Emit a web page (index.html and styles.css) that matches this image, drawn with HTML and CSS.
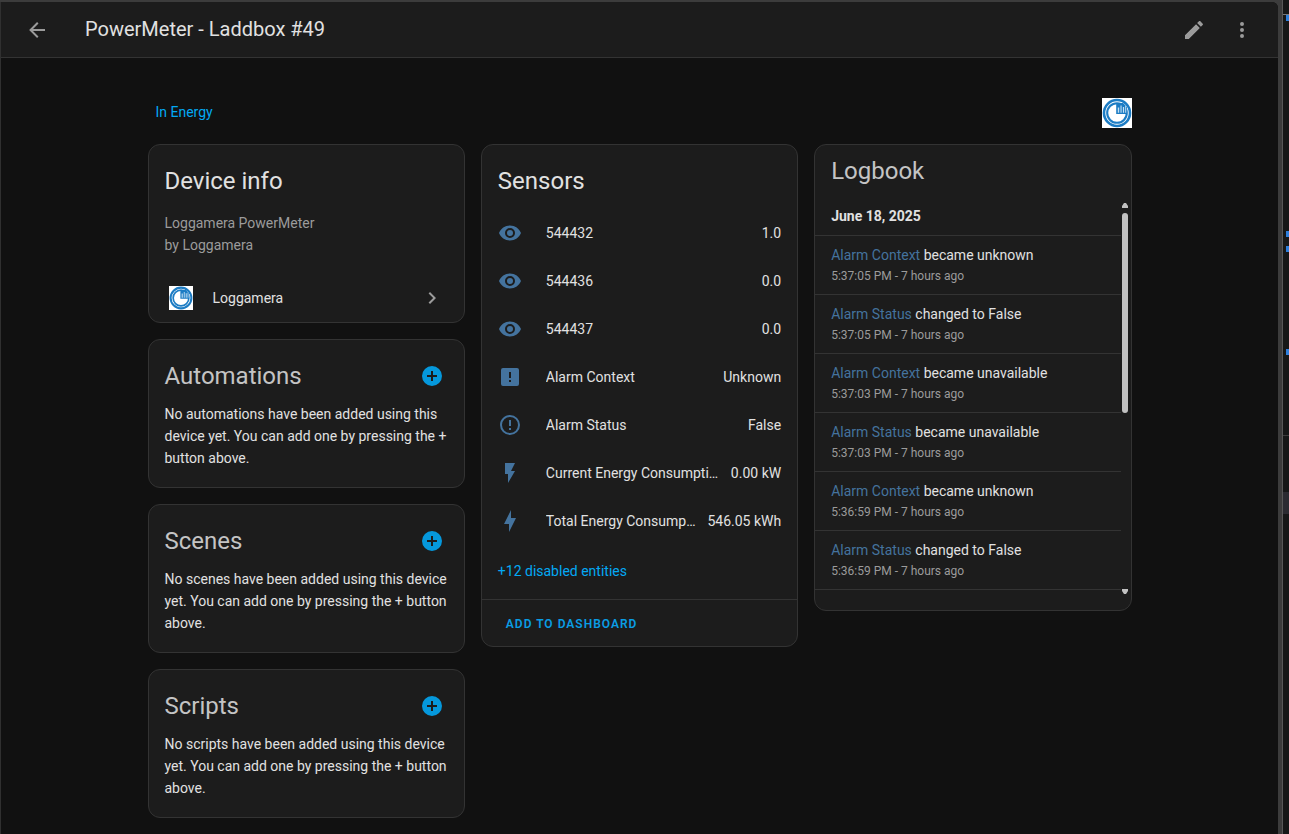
FILE: index.html
```html
<!DOCTYPE html>
<html lang="en">
<head>
<meta charset="utf-8">
<title>PowerMeter - Laddbox #49</title>
<link rel="stylesheet" href="styles.css">
</head>
<body>
<svg class="defs" aria-hidden="true">
  <symbol id="eye" viewBox="0 0 24 24"><path d="M12,9A3,3 0 0,0 9,12A3,3 0 0,0 12,15A3,3 0 0,0 15,12A3,3 0 0,0 12,9M12,17A5,5 0 0,1 7,12A5,5 0 0,1 12,7A5,5 0 0,1 17,12A5,5 0 0,1 12,17M12,4.5C7,4.5 2.73,7.61 1,12C2.73,16.39 7,19.5 12,19.5C17,19.5 21.27,16.39 23,12C21.27,7.61 17,4.5 12,4.5Z"/></symbol>
  <symbol id="alert-box" viewBox="0 0 24 24"><path d="M5,3H19A2,2 0 0,1 21,5V19A2,2 0 0,1 19,21H5A2,2 0 0,1 3,19V5A2,2 0 0,1 5,3M13,13V7H11V13H13M13,17V15H11V17H13Z"/></symbol>
  <symbol id="alert-circle" viewBox="0 0 24 24"><path d="M11,15H13V17H11V15M11,7H13V13H11V7M12,2C6.47,2 2,6.5 2,12A10,10 0 0,0 12,22A10,10 0 0,0 22,12A10,10 0 0,0 12,2M12,20A8,8 0 0,1 4,12A8,8 0 0,1 12,4A8,8 0 0,1 20,12A8,8 0 0,1 12,20Z"/></symbol>
  <symbol id="flash" viewBox="0 0 24 24"><path d="M7,2V13H10V22L17,10H13L17,2H7Z"/></symbol>
  <symbol id="bolt" viewBox="0 0 24 24"><path d="M11 15H6L13 1V9H18L11 23V15Z"/></symbol>
  <symbol id="plus-circle" viewBox="0 0 24 24"><path d="M17,13H13V17H11V13H7V11H11V7H13V11H17M12,2A10,10 0 0,0 2,12A10,10 0 0,0 12,22A10,10 0 0,0 22,12A10,10 0 0,0 12,2Z"/></symbol>
  <symbol id="brand" viewBox="0 0 30 30">
    <rect width="30" height="30" fill="#fff"/>
    <circle cx="15" cy="15" r="13" fill="none" stroke="#1c7cc4" stroke-width="2.6"/>
    <circle cx="15" cy="15" r="9.8" fill="none" stroke="#1c7cc4" stroke-width="2.1"/>
    <path d="M14.200 5H21L25 9V16H14.200Z" fill="#1c7cc4"/>
    <path d="M15.800 9.500H17.200V14.800H15.800ZM18.500 7.500H19.600V14.800H18.500ZM20.900 9H22.100V14.800H20.900ZM23.200 8H24.200V14.800H23.200Z" fill="#c5e0f3"/>
  </symbol>
</svg>
<div class="shell">
  <div class="window">
    <header class="toolbar">
      <button class="icon-btn" aria-label="Back"><svg class="icon" viewBox="0 0 24 24"><path d="M20,11V13H8L13.500,18.500L12.080,19.920L4.160,12L12.080,4.080L13.500,5.500L8,11H20Z"/></svg></button>
      <h1 class="toolbar-title">PowerMeter - Laddbox #49</h1>
      <button class="icon-btn" aria-label="Edit"><svg class="icon" viewBox="0 0 24 24"><path d="M20.710,7.040C21.100,6.650 21.100,6 20.710,5.630L18.370,3.290C18,2.900 17.350,2.900 16.960,3.290L15.120,5.120L18.870,8.870M3,17.250V21H6.750L17.810,9.930L14.060,6.180L3,17.250Z"/></svg></button>
      <button class="icon-btn" aria-label="Menu"><svg class="icon" viewBox="0 0 24 24"><path d="M12,16A2,2 0 0,1 14,18A2,2 0 0,1 12,20A2,2 0 0,1 10,18A2,2 0 0,1 12,16M12,10A2,2 0 0,1 14,12A2,2 0 0,1 12,14A2,2 0 0,1 10,12A2,2 0 0,1 12,10M12,4A2,2 0 0,1 14,6A2,2 0 0,1 12,8A2,2 0 0,1 10,6A2,2 0 0,1 12,4Z"/></svg></button>
    </header>
    <main class="content">
      <div class="area-row">
        <a class="link" href="#area">In Energy</a>
        <svg class="area-logo" role="img" aria-label="Loggamera"><use href="#brand"/></svg>
      </div>
      <div class="columns">
        <div class="column">
          <section class="card">
            <h2 class="card-title strong tall">Device info</h2>
            <p class="device-meta">Loggamera PowerMeter<br>by Loggamera</p>
            <a class="integration" href="#integration">
              <svg class="icon"><use href="#brand"/></svg>
              <span class="grow">Loggamera</span>
              <svg class="icon muted" viewBox="0 0 24 24"><path d="M8.590,16.580L13.170,12L8.590,7.410L10,6L16,12L10,18L8.590,16.580Z"/></svg>
            </a>
          </section>
          <section class="card">
            <div class="add-head"><h2 class="card-title">Automations</h2><button class="add-btn" aria-label="Add automation"><svg class="icon"><use href="#plus-circle"/></svg></button></div>
            <p class="card-text">No automations have been added using this device yet. You can add one by pressing the + button above.</p>
          </section>
          <section class="card">
            <div class="add-head"><h2 class="card-title">Scenes</h2><button class="add-btn" aria-label="Add scene"><svg class="icon"><use href="#plus-circle"/></svg></button></div>
            <p class="card-text">No scenes have been added using this device yet. You can add one by pressing the + button above.</p>
          </section>
          <section class="card">
            <div class="add-head"><h2 class="card-title">Scripts</h2><button class="add-btn" aria-label="Add script"><svg class="icon"><use href="#plus-circle"/></svg></button></div>
            <p class="card-text">No scripts have been added using this device yet. You can add one by pressing the + button above.</p>
          </section>
        </div>
        <div class="column">
          <section class="card">
            <h2 class="card-title strong tall">Sensors</h2>
            <ul class="sensors">
              <li class="sensor"><svg class="icon"><use href="#eye"/></svg><span class="name">544432</span><span>1.0</span></li>
              <li class="sensor"><svg class="icon"><use href="#eye"/></svg><span class="name">544436</span><span>0.0</span></li>
              <li class="sensor"><svg class="icon"><use href="#eye"/></svg><span class="name">544437</span><span>0.0</span></li>
              <li class="sensor"><svg class="icon"><use href="#alert-box"/></svg><span class="name">Alarm Context</span><span>Unknown</span></li>
              <li class="sensor"><svg class="icon"><use href="#alert-circle"/></svg><span class="name">Alarm Status</span><span>False</span></li>
              <li class="sensor"><svg class="icon"><use href="#flash"/></svg><span class="name">Current Energy Consumption</span><span>0.00 kW</span></li>
              <li class="sensor"><svg class="icon"><use href="#bolt"/></svg><span class="name">Total Energy Consumption</span><span>546.05 kWh</span></li>
            </ul>
            <button class="link disabled-toggle">+12 disabled entities</button>
            <div class="card-actions"><button class="action-btn">Add to dashboard</button></div>
          </section>
        </div>
        <div class="column">
          <section class="card">
            <h2 class="card-title logbook-title">Logbook</h2>
            <div class="logbook">
              <div class="entries">
                <h3 class="date">June 18, 2025</h3>
                <div class="entry"><p class="event"><a href="#e1">Alarm Context</a> became unknown</p><p class="time">5:37:05 PM - 7 hours ago</p></div>
                <div class="entry"><p class="event"><a href="#e2">Alarm Status</a> changed to False</p><p class="time">5:37:05 PM - 7 hours ago</p></div>
                <div class="entry"><p class="event"><a href="#e3">Alarm Context</a> became unavailable</p><p class="time">5:37:03 PM - 7 hours ago</p></div>
                <div class="entry"><p class="event"><a href="#e4">Alarm Status</a> became unavailable</p><p class="time">5:37:03 PM - 7 hours ago</p></div>
                <div class="entry"><p class="event"><a href="#e5">Alarm Context</a> became unknown</p><p class="time">5:36:59 PM - 7 hours ago</p></div>
                <div class="entry"><p class="event"><a href="#e6">Alarm Status</a> changed to False</p><p class="time">5:36:59 PM - 7 hours ago</p></div>
              </div>
              <div class="scrollbar" aria-hidden="true">
                <svg class="arrow" viewBox="0 0 6 5"><path d="M2 0H4L6 3V5H0V3Z"/></svg>
                <div class="track"><div class="thumb"></div></div>
                <svg class="arrow" viewBox="0 0 6 5"><path d="M0 0H6V2L4 5H2L0 2Z"/></svg>
              </div>
            </div>
          </section>
        </div>
      </div>
    </main>
  </div>
  <aside class="edge" aria-hidden="true">
    <div class="edge-line bright"></div>
    <div class="mark first"></div>
    <div class="mark second"></div>
    <div class="mark third"></div>
    <div class="mark fourth"></div>
    <div class="edge-line"></div>
    <div class="edge-block"></div>
  </aside>
</div>
</body>
</html>
```
FILE: styles.css
```css
* { box-sizing: border-box; }
body {
  margin: 0;
  background: #3c3c3c;
  color: #e1e1e1;
  font: 400 14px/22px Roboto, "Noto Sans", sans-serif;
}
h1, h2, h3, p, ul { margin: 0; padding: 0; font-weight: 400; }
button {
  margin: 0;
  padding: 0;
  border: 0;
  background: none;
  color: inherit;
  font: inherit;
  cursor: pointer;
}
a { text-decoration: none; color: inherit; }
.defs { display: none; }
.icon { display: block; flex: none; width: 24px; height: 24px; fill: currentColor; }
.muted { color: #9b9b9b; }
.grow { flex: 1; }
.link { color: #03a9f4; }

.shell { display: flex; min-height: 100vh; }
.window {
  flex: 1;
  min-width: 0;
  margin: 2px 4px 0 0;
  border-left: 1px solid #303030;
  border-radius: 0 6px 0 0;
  background: #111;
  overflow: hidden;
}

.toolbar {
  display: flex;
  align-items: center;
  height: 56px;
  padding: 0 12px;
  border-bottom: 1px solid #333;
  background: #1c1c1c;
}
.toolbar-title { flex: 1; padding-bottom: 2px; margin-left: 24px; font-size: 20px; line-height: 24px; }
.icon-btn {
  display: flex;
  align-items: center;
  justify-content: center;
  width: 48px;
  height: 48px;
  color: #9b9b9b;
}

.content { max-width: 1000px; margin: 0 auto; padding: 40px 8px 16px; }
.area-row {
  display: flex;
  align-items: center;
  justify-content: space-between;
  padding-left: 8px;
  margin-bottom: 16px;
}
.area-row .link { padding-bottom: 2px; }
.area-logo { display: block; width: 30px; height: 30px; }
.columns {
  display: grid;
  grid-template-columns: repeat(3, minmax(0, 1fr));
  gap: 16px;
  align-items: start;
}
.column { display: grid; gap: 16px; }
.card {
  min-width: 0;
  border: 1px solid #333;
  border-radius: 12px;
  background: #1c1c1c;
  overflow: hidden;
}
.card-title { padding: 0 16px; color: #c4c4c4; font-size: 24px; line-height: 48px; }
.card-title.strong { color: #e1e1e1; }
.card-title.tall { padding-top: 12px; }
.device-meta { padding: 7px 16px 18px; color: #9b9b9b; }
.integration {
  display: flex;
  align-items: center;
  gap: 20px;
  height: 48px;
  padding: 0 20px;
}
.add-head {
  display: flex;
  align-items: center;
  justify-content: space-between;
  padding: 12px 20px 0 0;
}
.add-btn { color: #0598dc; }
.card-text { padding: 3px 16px 18px; }

.sensors { padding: 4px 16px 0; list-style: none; }
.sensor { display: flex; align-items: center; height: 48px; white-space: nowrap; }
.sensor .icon { color: #44739e; }
.name {
  flex: 1;
  min-width: 0;
  margin: 0 8px 0 24px;
  overflow: hidden;
  text-overflow: ellipsis;
}
.disabled-toggle { display: block; padding: 15px 16px 17px; }
.card-actions { padding: 7px 16px 5px; border-top: 1px solid #333; }
.action-btn {
  display: block;
  height: 34px;
  padding: 0 8px;
  color: #0a9de4;
  font-size: 12px;
  font-weight: 600;
  letter-spacing: 1px;
  text-transform: uppercase;
}

.logbook-title { padding-top: 2px; }
.logbook { display: flex; padding-bottom: 16px; }
.entries { flex: 1; min-width: 0; padding: 10px 0 4px; }
.date { padding: 0 16px 8px; border-bottom: 1px solid #333; font-size: 14px; font-weight: 700; }
.entry { padding: 8px 16px; border-bottom: 1px solid #333; }
.event a { color: #44739e; }
.time { color: #9b9b9b; font-size: 12px; line-height: 20px; }
.scrollbar { display: flex; flex-direction: column; width: 9px; padding: 8px 0 0; margin-left: 1px; }
.arrow { display: block; width: 6px; height: 5px; fill: #c1c1c1; }
.track { flex: 1; padding: 5px 0; }
.thumb { width: 6px; height: 54%; border-radius: 3px; background: #c1c1c1; }

.edge { width: 7px; border-left: 1px solid #585858; background: #161717; }
.edge-line { height: 1px; background: #3c3c3c; }
.edge-line.bright { margin-top: 14px; background: #777; }
.mark { width: 3px; height: 6px; margin-left: auto; background: #2f7fdc; }
.mark.second { margin-top: 210px; }
.mark.third { margin-top: 9px; }
.mark.fourth { margin: 97px 0 80px auto; }
.edge-block { height: 22px; margin-top: 56px; background: #2b2b31; }
```
